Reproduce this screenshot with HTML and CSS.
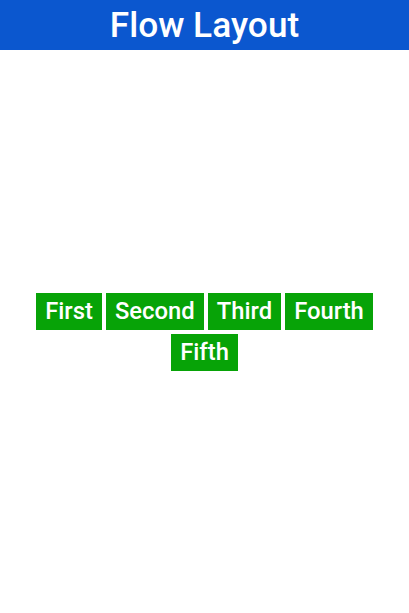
FILE: index.html
```html
<!DOCTYPE html>
<html>
<head>
<meta charset="utf-8">
<link rel="stylesheet" href="styles.css">
</head>
<body>
<header class="bar">Flow Layout</header>
<main class="content">
  <div class="flow">
    <span class="item">First</span>
    <span class="item">Second</span>
    <span class="item">Third</span>
    <span class="item">Fourth</span>
    <span class="item">Fifth</span>
  </div>
</main>
</body>
</html>
```
FILE: styles.css
```css
html, body {
  margin: 0;
  padding: 0;
  height: 100%;
}
body {
  display: flex;
  flex-direction: column;
  font-family: "Roboto Medium", Roboto, "Liberation Sans", sans-serif;
  background: #ffffff;
}
.bar {
  height: 50px;
  flex: none;
  background: #0b57cf;
  color: #ffffff;
  font-size: 35.2px;
  line-height: 50px;
  text-align: center;
}
.content {
  flex: 1;
  display: flex;
  align-items: center;
  justify-content: center;
  padding: 0 16px;
}
.flow {
  display: flex;
  flex-wrap: wrap;
  justify-content: center;
  gap: 4px;
}
.item {
  background: #07a307;
  color: #ffffff;
  font-size: 23.8px;
  line-height: 37px;
  padding: 0 9px;
}
```
